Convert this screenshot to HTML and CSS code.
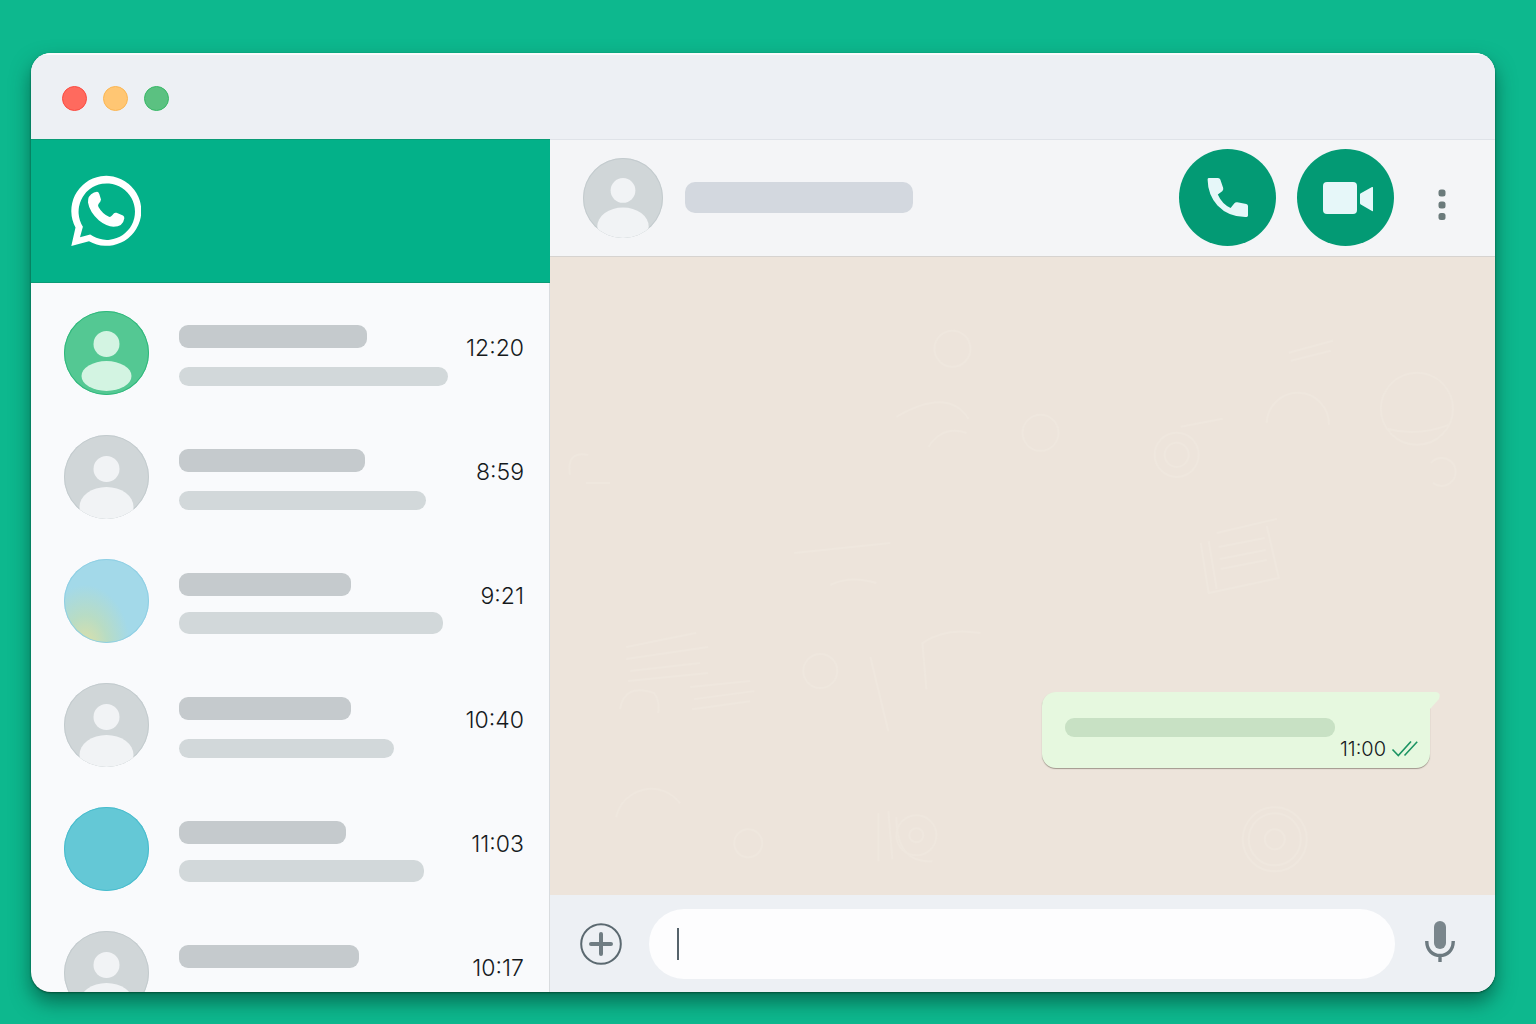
FILE: index.html
```
<!DOCTYPE html>
<html lang="en">

<head>
    <meta charset="UTF-8">
    <meta name="viewport" content="width=device-width, initial-scale=1.0">
    <title>Chat</title>
    <link rel="stylesheet" href="styles.css">
</head>

<body>

    <!-- shared shapes -->
    <svg class="defs" aria-hidden="true">
        <symbol id="person" viewBox="0 0 84 84">
            <circle cx="42" cy="34" r="13" />
            <ellipse cx="42" cy="72" rx="27" ry="20" />
        </symbol>
    </svg>

    <main class="window">

        <!-- title bar -->
        <div class="title-bar">
            <button class="dot dot-red" aria-label="Close"></button>
            <button class="dot dot-yellow" aria-label="Minimize"></button>
            <button class="dot dot-green" aria-label="Zoom"></button>
        </div>

        <div class="content">

            <!-- left column -->
            <div class="sidebar">
                <div class="brand">
                    <svg class="logo" viewBox="0 0 70 72" role="img" aria-label="WhatsApp">
                        <path fill-rule="evenodd" d="M4.5 52.5A35 35 0 1 1 18 66.3L.3 71ZM11.9 51.7L9 62.3L19.2 59.5A28.2 28.2 0 1 0 11.9 51.7Z" />
                        <path d="M23 17.5L26 16.8Q27.5 16.8 28.3 19L30 24.5Q30 26 27.5 29Q26.6 30.5 27.5 32Q31.5 39 38 41.8Q39.6 42.3 41 40.5L43 38.3Q44 37.3 45.5 37.8L52 40.5Q53.6 41.3 53.3 43.5Q52 51.8 42.5 51.8Q35.5 51.5 28 45.5Q18.5 37 17 27.5Q16.4 20.5 23 17.5Z" />
                    </svg>
                </div>

                <ul class="chat-list">
                    <li>
                        <a class="chat" href="#">
                            <span class="avatar avatar-green">
                                <svg viewBox="0 0 84 84">
                                    <circle cx="42" cy="33" r="13" />
                                    <ellipse cx="42" cy="65" rx="25" ry="15" />
                                </svg>
                            </span>
                            <span class="lines">
                                <span class="name" style="width: 70%"></span>
                                <span class="preview" style="width: 100%"></span>
                            </span>
                            <time>12:20</time>
                        </a>
                    </li>
                    <li>
                        <a class="chat" href="#">
                            <span class="avatar"><svg><use href="#person" /></svg></span>
                            <span class="lines">
                                <span class="name" style="width: 69%"></span>
                                <span class="preview" style="width: 92%"></span>
                            </span>
                            <time>8:59</time>
                        </a>
                    </li>
                    <li>
                        <a class="chat" href="#">
                            <span class="avatar avatar-sky"></span>
                            <span class="lines lines-thick">
                                <span class="name" style="width: 64%"></span>
                                <span class="preview" style="width: 98%"></span>
                            </span>
                            <time>9:21</time>
                        </a>
                    </li>
                    <li>
                        <a class="chat" href="#">
                            <span class="avatar"><svg><use href="#person" /></svg></span>
                            <span class="lines">
                                <span class="name" style="width: 64%"></span>
                                <span class="preview" style="width: 80%"></span>
                            </span>
                            <time>10:40</time>
                        </a>
                    </li>
                    <li>
                        <a class="chat" href="#">
                            <span class="avatar avatar-teal"></span>
                            <span class="lines lines-thick">
                                <span class="name" style="width: 62%"></span>
                                <span class="preview" style="width: 91%"></span>
                            </span>
                            <time>11:03</time>
                        </a>
                    </li>
                    <li>
                        <a class="chat" href="#">
                            <span class="avatar"><svg><use href="#person" /></svg></span>
                            <span class="lines">
                                <span class="name" style="width: 67%"></span>
                                <span class="preview" style="width: 0%"></span>
                            </span>
                            <time>10:17</time>
                        </a>
                    </li>
                </ul>
            </div>

            <!-- right column -->
            <div class="conversation">
                <div class="chat-header">
                    <span class="avatar avatar-small"><svg><use href="#person" /></svg></span>
                    <span class="contact-name"></span>
                    <button class="call-button" aria-label="Voice call">
                        <svg width="42" height="41" viewBox="0 0 42 41">
                            <path d="M2 1H11Q12.8 1 13.3 2.6L16.2 11Q16.6 13 15.2 14.2L10.8 17.5Q15 27 23.6 31L27.4 26.2Q28.5 25 30.3 25.3L39.3 27Q41 27.4 41 29V38.6Q41 40 39.6 40Q22 40.5 10.5 28.5Q.8 17.5 .6 2.4Q.6 1 2 1Z" />
                        </svg>
                    </button>
                    <button class="call-button" aria-label="Video call">
                        <svg width="56" height="32" viewBox="-4 0 56 32">
                            <rect x="1" y="0" width="34" height="32" rx="4" />
                            <path d="M38 12.5Q38 11.6 38.8 11.2L50 5Q51 4.6 51 5.6V28.5Q51 29.6 50 29L38.8 22.5Q38 22 38 21Z" />
                        </svg>
                    </button>
                    <button class="menu-button" aria-label="Menu">
                        <svg width="8" height="32" viewBox="0 0 8 32">
                            <rect x=".5" y=".5" width="7" height="7" rx="2.5" />
                            <rect x=".5" y="12.5" width="7" height="7" rx="2.5" />
                            <rect x=".5" y="24" width="7" height="7" rx="2.5" />
                        </svg>
                    </button>
                </div>

                <div class="messages">
                    <!-- wallpaper doodles -->
                    <svg class="wallpaper" viewBox="0 0 944 638" preserveAspectRatio="xMidYMid slice" aria-hidden="true">
                        <circle cx="866" cy="152" r="36" />
                        <path d="M836 172q30 8 62-4M880 206a14 14 0 1 1 2 20" />
                        <circle cx="626" cy="198" r="22" />
                        <circle cx="626" cy="198" r="12" />
                        <path d="M716 166a31 31 0 0 1 62 2M630 170l42-8M738 96l44-12M740 104l40-10" />
                        <path d="M650 286l8 50 70-15-12-52M658 284l8 48M666 276l60-14M668 290l46-9M669 302l46-9M670 312l46-9" />
                        <circle cx="724" cy="582" r="32" />
                        <circle cx="724" cy="582" r="26" />
                        <circle cx="724" cy="582" r="10" />
                        <path d="M328 556v48M338 554l4 48M346 560q0 46 36 44" />
                        <circle cx="366" cy="578" r="20" />
                        <circle cx="366" cy="578" r="7" />
                        <circle cx="490" cy="176" r="18" />
                        <circle cx="402" cy="92" r="18" />
                        <path d="M346 160q52-30 72 2M378 190q14-22 38-14" />
                        <path d="M76 390l70-14M76 402l82-12M80 414l70-8M78 424l80-8M140 430l60-6M144 442l60-8M142 452l58-8" />
                        <path d="M376 432l-4-46q22-16 58-10M244 296l96-10M280 328q20-10 46-2" />
                        <circle cx="270" cy="414" r="17" />
                        <path d="M66 560a36 36 0 0 1 64-14M70 452q4-26 34-16 6 8 4 20" />
                        <circle cx="198" cy="586" r="14" />
                        <path d="M320 400l18 74M20 218q-4-24 18-20M36 226h24" />
                    </svg>
                    <div class="bubble">
                        <span class="bubble-line"></span>
                        <div class="bubble-meta">
                            <time>11:00</time>
                            <svg class="ticks" width="27" height="17" viewBox="0 0 27 17">
                                <path d="M1.5 8.5L7.3 14.5L20 .5M13.500 14.5L26.2 .8" />
                            </svg>
                        </div>
                        <svg class="tail" width="12" height="20" viewBox="0 0 12 20">
                            <path d="M0 0H6Q11.500 1 9 7L0 17Z" />
                        </svg>
                    </div>
                </div>

                <!-- message input -->
                <div class="composer">
                    <button class="plain-button" aria-label="Attach">
                        <svg width="42" height="42" viewBox="0 0 42 42">
                            <circle cx="21" cy="21" r="19.800" fill="none" stroke="#5b6970" stroke-width="2" />
                            <path d="M21 11V31M11 21H31" stroke="#707d83" stroke-width="4" stroke-linecap="round" />
                        </svg>
                    </button>
                    <div class="field">
                        <input type="text" aria-label="Message">
                        <span class="caret"></span>
                    </div>
                    <button class="plain-button mic-button" aria-label="Record voice message">
                        <svg width="30" height="42" viewBox="0 0 30 42">
                            <rect x="9" y="0" width="12" height="28" rx="6" fill="#7a868c" />
                            <path d="M1.8 20V21C2 29.5 8 34.5 15 34.5S28 29.5 28.2 21V20M15 34.5V41" fill="none" stroke="#6d7a80" stroke-width="3.4" />
                        </svg>
                    </button>
                </div>
            </div>
        </div>
    </main>

</body>

</html>
```
FILE: styles.css
```
* {
    box-sizing: border-box;
}

body {
    margin: 0;
    padding: 53px 41px 32px 31px;
    height: 100vh;
    background: #0db88e;
    font-family: Inter, "Liberation Sans", sans-serif;
    color: #15191c;
}

button {
    border: none;
    padding: 0;
    background: none;
    cursor: pointer;
}

svg {
    display: block;
}

.defs {
    position: absolute;
    width: 0;
    height: 0;
}

/* window */
.window {
    display: flex;
    flex-direction: column;
    height: 100%;
    border-radius: 20px;
    overflow: hidden;
    background: #f9fafc;
    box-shadow: 0 1px 2px rgba(0, 70, 45, 0.8), 0 10px 20px rgba(0, 60, 45, 0.6);
}

.title-bar {
    display: flex;
    align-items: center;
    gap: 16px;
    flex: 0 0 86px;
    padding: 5px 31px 0;
    background: #edf0f4;
    box-shadow: inset 0 2px #fafbfc;
}

.dot {
    width: 25px;
    height: 25px;
    border-radius: 50%;
}

.dot-red {
    background: #ff6a5e;
    border: 1px solid #fb4a40;
}

.dot-yellow {
    background: #ffc673;
    border: 1px solid #fbb652;
}

.dot-green {
    background: #5bc181;
    border: 1px solid #36b866;
}

.content {
    display: flex;
    flex: 1;
    min-height: 0;
}

/* left column */
.sidebar {
    display: flex;
    flex-direction: column;
    width: 35.45%;
    border-right: 1px solid #d9dcdf;
}

.brand {
    display: flex;
    align-items: center;
    flex: 0 0 144px;
    margin-right: -1px;
    padding: 0 40px;
    background: #03b189;
    border-top: 1px solid #0a9c76;
    border-bottom: 1px solid #0a9c76;
}

.logo {
    width: 70px;
    height: 72px;
    fill: #fff;
}

.chat-list {
    flex: 1;
    min-height: 0;
    margin: 0;
    padding: 8px 0 0;
    overflow: hidden;
    list-style: none;
}

.chat {
    display: flex;
    align-items: center;
    height: 124px;
    padding: 0 25px 0 33px;
    color: inherit;
    text-decoration: none;
}

.avatar {
    flex: none;
    width: 85px;
    height: 84px;
    border-radius: 50%;
    overflow: hidden;
    background: #d0d6d8;
    box-shadow: inset 0 0 0 1px #c3cbce;
}

.avatar svg {
    width: 100%;
    height: 100%;
    fill: #f1f3f5;
}

.avatar-green {
    background: #54c893;
    box-shadow: inset 0 0 0 1px #2fb87c;
}

.avatar-green svg {
    fill: #d3f4e2;
}

.avatar-sky {
    background: radial-gradient(ellipse at 25% 105%, #dfe0a6 0, #b8dcc4 25%, #a3d9e9 50%);
    box-shadow: inset 0 0 0 1px #8fcfe4;
}

.avatar-teal {
    background: #64c8d6;
    box-shadow: inset 0 0 0 1px #48bccd;
}

.avatar-small {
    width: 80px;
    height: 80px;
}

.lines {
    display: flex;
    flex-direction: column;
    flex: 1;
    gap: 19px;
    margin-left: 30px;
    padding-top: 5px;
}

.name {
    height: 23px;
    border-radius: 9px;
    background: #c5cacd;
}

.preview {
    height: 19px;
    border-radius: 10px;
    background: #d2d8da;
}

.lines-thick {
    gap: 16px;
}

.lines-thick .preview {
    height: 22px;
}

time {
    font-weight: 300;
}

.chat time {
    width: 76px;
    padding-bottom: 11px;
    font-size: 23px;
    line-height: 28px;
    text-align: right;
}

/* right column */
.conversation {
    display: flex;
    flex-direction: column;
    flex: 1;
    min-width: 0;
}

.chat-header {
    display: flex;
    align-items: center;
    flex: 0 0 118px;
    padding: 0 49px 1px 33px;
    background: #f4f5f7;
    border-top: 1px solid #dfe3e8;
    border-bottom: 1px solid #d6d3d0;
}

.contact-name {
    width: 228px;
    height: 31px;
    margin: 0 auto 0 22px;
    border-radius: 10px;
    background: #d3d8df;
}

.call-button {
    display: flex;
    align-items: center;
    justify-content: center;
    width: 97px;
    height: 97px;
    margin-right: 21px;
    border-radius: 50%;
    background: #039a74;
    fill: #e6f7f9;
}

.menu-button {
    margin-left: 23px;
    padding-top: 14px;
    fill: #6b7b7b;
}

.messages {
    position: relative;
    display: flex;
    flex-direction: column;
    align-items: flex-end;
    justify-content: flex-end;
    flex: 1;
    min-height: 0;
    padding: 0 65px 127px;
    background: #ede4db;
}

.wallpaper {
    position: absolute;
    inset: 0;
    width: 100%;
    height: 100%;
    fill: none;
    stroke: #efe7de;
    stroke-width: 2;
}

/* message */
.bubble {
    position: relative;
    width: 388px;
    max-width: 100%;
    height: 76px;
    padding: 26px 12px 0 23px;
    border-radius: 14px 0 14px 14px;
    background: #e6f8df;
    box-shadow: 0 1px 1px rgba(110, 100, 90, 0.6);
}

.bubble-line {
    display: block;
    width: 270px;
    height: 19px;
    border-radius: 9px;
    background: #c8e1c4;
}

.bubble-meta {
    display: flex;
    align-items: center;
    justify-content: flex-end;
    gap: 5px;
}

.bubble-meta time {
    font-size: 20px;
    line-height: 24px;
}

.ticks {
    fill: none;
    stroke: #1c9463;
    stroke-width: 1.6;
}

.tail {
    position: absolute;
    top: 0;
    left: 100%;
    fill: #e6f8df;
}

/* composer */
.composer {
    display: flex;
    align-items: center;
    gap: 27px;
    flex: 0 0 97px;
    padding: 0 40px 0 30px;
    background: #edf0f4;
}

.field {
    position: relative;
    flex: 1;
}

.field input {
    display: block;
    width: 100%;
    height: 70px;
    padding: 0 28px;
    border: none;
    border-radius: 35px;
    background: #fdfdfe;
    font: inherit;
    font-size: 23px;
}

.caret {
    position: absolute;
    top: 19px;
    left: 28px;
    width: 2px;
    height: 32px;
    background: #55636b;
}

.mic-button {
    padding: 0 0 4px 3px;
}
```
